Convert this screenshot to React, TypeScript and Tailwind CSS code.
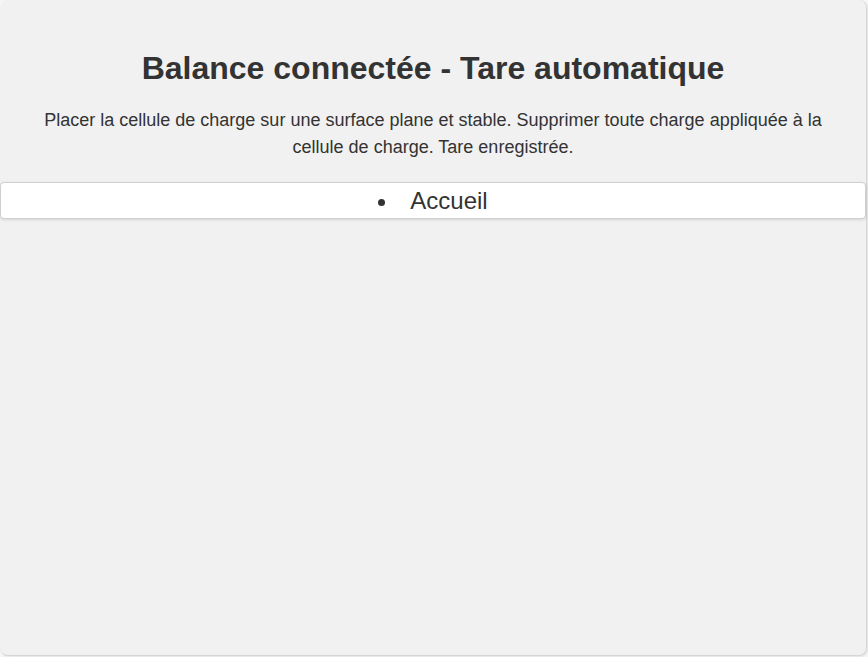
export default function App() {
  return (
    <div className="w-[868px] h-[657px] bg-[#f6f6f6] font-['Liberation_Sans',Arial,sans-serif] text-[#333]">
      <div className="w-[867px] h-[656px] rounded-lg bg-[#f1f1f1] border-r border-b border-[#d6d6d6] shadow-[1px_1px_2px_rgba(0,0,0,0.08)]">
        <h1 className="pt-[49px] text-center text-[32px] leading-[38px] font-bold">
          Balance connectée - Tare automatique
        </h1>
        <p className="mt-[20px] px-[30px] text-center text-[18px] leading-[27px]">
          Placer la cellule de charge sur une surface plane et stable. Supprimer toute charge appliquée à la
          cellule de charge. Tare enregistrée.
        </p>
        <nav className="mt-[21px] h-[37px] bg-white border border-[#cfcfcf] rounded-[4px] shadow-[0_1px_3px_rgba(0,0,0,0.12)] flex items-center justify-center">
          <ul className="list-disc list-inside text-[24px] leading-[28px]">
            <li>Accueil</li>
          </ul>
        </nav>
      </div>
    </div>
  );
}
